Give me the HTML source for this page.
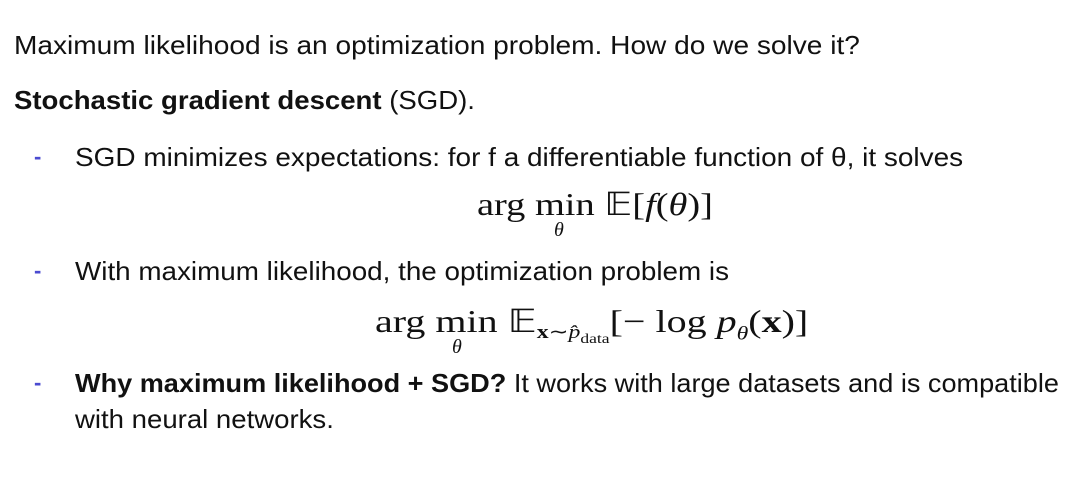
<!DOCTYPE html>
<html><head><meta charset="utf-8"><style>
body{margin:0;width:1080px;height:484px;background:#fff;position:relative;overflow:hidden;font-family:"Liberation Sans",sans-serif;color:#111}
.t{position:absolute;font-size:26px;white-space:nowrap;line-height:1;transform-origin:left top;transform:scaleX(1.06)}
.d{position:absolute;left:34px;color:#4a4ad0;font-size:22px;font-weight:bold;line-height:1}
.m{position:absolute;font-family:"Liberation Serif",serif;font-size:32px;white-space:nowrap;line-height:1;transform-origin:left top}
.s{position:absolute;font-family:"Liberation Serif",serif;font-style:italic;font-size:20px;line-height:1}
</style></head><body>
<div class="t" style="left:14px;top:32px;transform:scaleX(1.08)">Maximum likelihood is an optimization problem. How do we solve it?</div>
<div class="t" style="left:14px;top:87px"><b>Stochastic gradient descent</b> (SGD).</div>
<div class="d" style="top:146px">-</div>
<div class="t" style="left:75px;top:144px;transform:scaleX(1.075)">SGD minimizes expectations: for f a differentiable function of θ, it solves</div>
<div class="m" style="left:477px;top:188px;transform:scaleX(1.2)">arg min 𝔼[<i>f</i>(<i>θ</i>)]</div>
<div class="s" style="left:554px;top:220px">θ</div>
<div class="d" style="top:260px">-</div>
<div class="t" style="left:75px;top:258px;transform:scaleX(1.07)">With maximum likelihood, the optimization problem is</div>
<div class="m" style="left:375px;top:305px;transform:scaleX(1.25)">arg min 𝔼<span style="font-size:19px;vertical-align:-6px"><b>x</b>∼<i>p̂</i><sub style="font-size:14px">data</sub></span>[− log <i>p</i><sub style="font-size:19px"><i>θ</i></sub>(<b>x</b>)]</div>
<div class="s" style="left:452px;top:337px">θ</div>
<div class="d" style="top:372px">-</div>
<div class="t" style="left:75px;top:370px;transform:scaleX(1.042)"><b>Why maximum likelihood + SGD?</b> It works with large datasets and is compatible</div>
<div class="t" style="left:75px;top:406px">with neural networks.</div>
</body></html>
